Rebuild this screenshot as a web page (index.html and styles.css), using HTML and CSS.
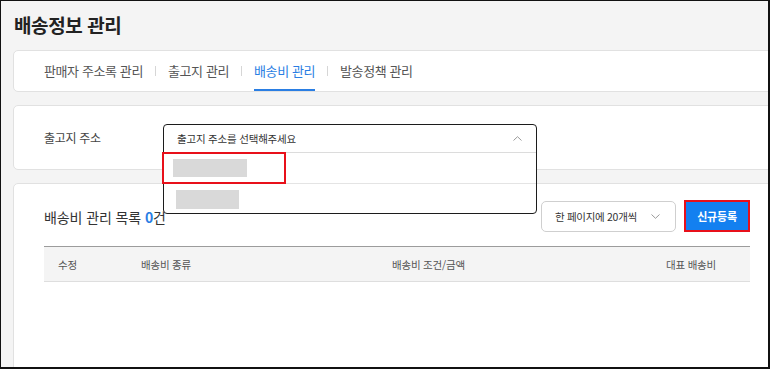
FILE: index.html
```html
<!DOCTYPE html>
<html lang="ko">
<head>
    <meta charset="UTF-8">
    <meta name="viewport" content="width=device-width, initial-scale=1.0">
    <title>배송정보 관리</title>
    <link rel="stylesheet" href="styles.css">
</head>
<body>
    <div class="frame">
        <div class="page">
            <h1 class="page-title">배송정보 관리</h1>

            <nav class="card tabs">
                <a class="tab">판매자 주소록 관리</a>
                <span class="tab-sep"></span>
                <a class="tab">출고지 관리</a>
                <span class="tab-sep"></span>
                <a class="tab is-active">배송비 관리</a>
                <span class="tab-sep"></span>
                <a class="tab">발송정책 관리</a>
            </nav>

            <section class="card filter">
                <label class="filter-label">출고지 주소</label>
                <div class="select-wrap">
                    <div class="dropdown">
                        <div class="dropdown-head">
                            <span>출고지 주소를 선택해주세요</span>
                            <svg class="chevron" width="9" height="5" viewBox="0 0 9 5" fill="none" stroke="currentColor">
                                <path d="M0.5 4.5 4.5 0.7 8.5 4.5"/>
                            </svg>
                        </div>
                        <ul class="dropdown-list">
                            <li class="dropdown-option"><span class="redact redact-wide"></span></li>
                            <li class="dropdown-option"><span class="redact redact-narrow"></span></li>
                        </ul>
                        <span class="mark-box"></span>
                    </div>
                </div>
            </section>

            <section class="card list">
                <div class="list-toolbar">
                    <h2 class="list-title">배송비 관리 목록 <em>0</em>건</h2>
                    <div class="list-actions">
                        <div class="page-size">
                            <span>한 페이지에 20개씩</span>
                            <svg class="chevron" width="9" height="5" viewBox="0 0 9 5" fill="none" stroke="currentColor">
                                <path d="M0.5 0.5 4.5 4.3 8.5 0.5"/>
                            </svg>
                        </div>
                        <button class="btn-new" type="button">신규등록</button>
                    </div>
                </div>

                <div class="table-head">
                    <span>수정</span>
                    <span>배송비 종류</span>
                    <span>배송비 조건/금액</span>
                    <span>대표 배송비</span>
                </div>
            </section>
        </div>
    </div>
</body>
</html>
```

FILE: styles.css
```css
:root {
    --page-bg: #f4f4f4;
    --card-border: #e1e1e1;
    --text-strong: #222;
    --text-body: #444;
    --text-muted: #555;
    --blue: #2a7ee3;
    --btn-blue: #1380f0;
    --mark-red: #e8101a;
    --redact: #d9d9d9;
    --font-kr: "Noto Sans CJK KR", "Noto Sans", sans-serif;
}

* {
    box-sizing: border-box;
    margin: 0;
    padding: 0;
}

body {
    margin: 0;
    font-family: var(--font-kr);
    color: var(--text-body);
    background: #fff;
}

.frame {
    width: 770px;
    height: 369px;
    border-style: solid;
    border-color: #111;
    border-width: 1px 2px 2px 1px;
    background: var(--page-bg);
    overflow: hidden;
}

.page {
    padding: 12px 0 0 12px;
}

.page-title {
    font-size: 19px;
    line-height: 24px;
    font-weight: 700;
    color: var(--text-strong);
    letter-spacing: -0.4px;
    margin-bottom: 13px;
    padding-left: 1px;
}

.card {
    background: #fff;
    border: 1px solid var(--card-border);
    border-radius: 5px;
    margin-right: -13px;
    margin-bottom: 13px;
}

/* tabs */
.tabs {
    height: 42px;
    display: flex;
    align-items: stretch;
    padding-left: 30px;
}

.tab {
    display: flex;
    align-items: center;
    font-size: 13px;
    letter-spacing: -0.4px;
    color: var(--text-muted);
    border-bottom: 2px solid transparent;
    padding-top: 1px;
}

.tab.is-active {
    color: var(--blue);
    border-bottom-color: var(--blue);
}

.tab-sep {
    align-self: center;
    width: 1px;
    height: 10px;
    margin: 0 12px;
    background: #d6d6d6;
}

/* filter */
.filter {
    position: relative;
    z-index: 2;
    display: flex;
    align-items: center;
    height: 65px;
    padding-left: 30px;
}

.filter-label {
    width: 119px;
    font-size: 12px;
    letter-spacing: -0.3px;
    color: var(--text-body);
}

.select-wrap {
    position: relative;
    width: 374px;
    height: 28px;
}

.dropdown {
    position: absolute;
    top: 0;
    left: 0;
    width: 100%;
    background: #fff;
    border: 1px solid #1c1c1c;
    border-radius: 4px;
}

.dropdown-head {
    height: 28px;
    display: flex;
    align-items: center;
    justify-content: space-between;
    padding: 0 14px 0 13px;
    border-bottom: 1px solid #dcdcdc;
    font-size: 10.5px;
    letter-spacing: -0.2px;
    color: #333;
}

.chevron {
    color: #9a9a9a;
    display: block;
}

.dropdown-list {
    list-style: none;
}

.dropdown-option {
    height: 30px;
    display: flex;
    align-items: center;
}

.dropdown-option + .dropdown-option {
    border-top: 1px solid #e4e4e4;
}

.redact {
    display: block;
    background: var(--redact);
}

.redact-wide {
    width: 74px;
    height: 18px;
    margin-left: 9px;
}

.redact-narrow {
    width: 63px;
    height: 19px;
    margin-left: 12px;
    margin-top: 2px;
}

.mark-box {
    position: absolute;
    top: 27px;
    left: -2px;
    width: 124px;
    height: 32px;
    border: 2px solid var(--mark-red);
}

/* list */
.list {
    height: 300px;
    padding: 16px 30px 0 30px;
}

.list-toolbar {
    display: flex;
    align-items: center;
    justify-content: space-between;
}

.list-title {
    font-size: 14px;
    font-weight: 400;
    letter-spacing: -0.1px;
    color: #333;
    padding-top: 2px;
}

.list-title em {
    font-style: normal;
    font-weight: 700;
    color: var(--blue);
}

.list-actions {
    display: flex;
    align-items: center;
    gap: 8px;
}

.page-size {
    width: 135px;
    height: 31px;
    display: flex;
    align-items: center;
    justify-content: space-between;
    padding: 0 15px 0 13px;
    border: 1px solid #cfcfcf;
    border-radius: 5px;
    font-size: 10.5px;
    letter-spacing: -0.3px;
    color: #333;
}

.btn-new {
    width: 66px;
    height: 32px;
    border: 2px solid var(--mark-red);
    background: var(--btn-blue);
    color: #fff;
    font-family: var(--font-kr);
    font-size: 11px;
    font-weight: 700;
    letter-spacing: -0.2px;
}

.table-head {
    margin-top: 14px;
    height: 36px;
    display: grid;
    grid-template-columns: 83px 251px 274px 1fr;
    align-items: center;
    padding-left: 14px;
    background: var(--page-bg);
    border-top: 1px solid #9c9c9c;
    border-bottom: 1px solid #dedede;
    font-size: 10.5px;
    letter-spacing: -0.2px;
    color: var(--text-muted);
}
```
